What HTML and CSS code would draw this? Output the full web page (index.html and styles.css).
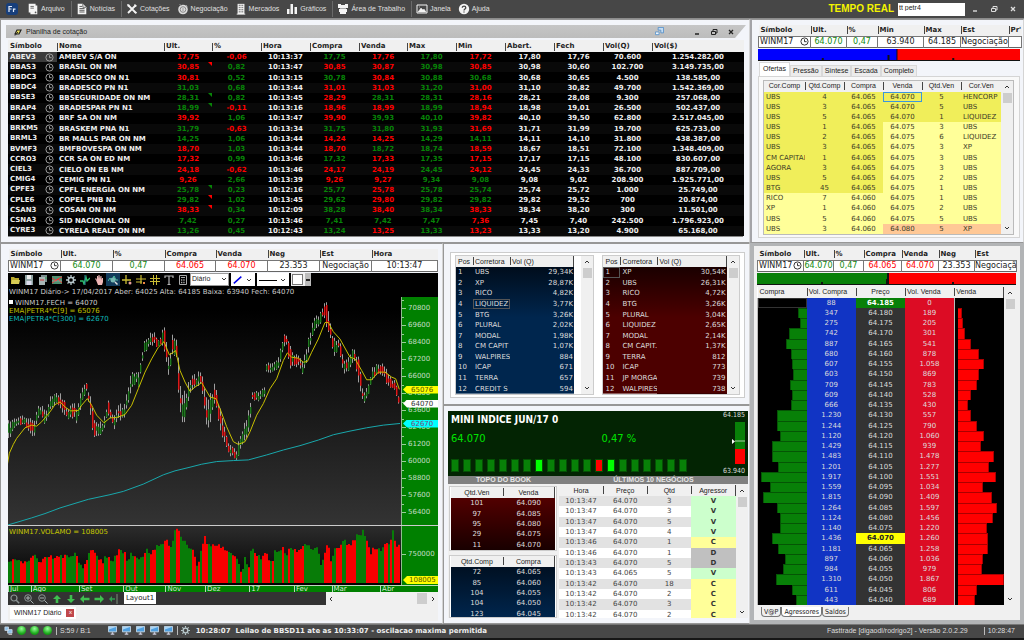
FILE: index.html
```html
<!DOCTYPE html>
<html lang="pt-BR">
<head>
<meta charset="utf-8">
<title>Fasttrade</title>
<link rel="stylesheet" href="styles.css">
</head>
<body>
<svg class="sprite" aria-hidden="true">
  <symbol id="i-clock" viewBox="0 0 10 10"><circle cx="5" cy="5" r="4" fill="none" stroke="currentColor"/><path d="M5 2.500V5.200H7.400" fill="none" stroke="currentColor"/></symbol>
  <symbol id="i-file" viewBox="0 0 12 14"><path d="M1 1h8v2h2v10H3v-2H1z" fill="#f4f4f4"/><path d="M3 4h4M3 6h4" stroke="#555"/><circle cx="9" cy="11" r="1" fill="#555"/></symbol>
  <symbol id="i-news" viewBox="0 0 12 14"><path d="M1 1h6l4 4v8H1z" fill="#f4f4f4"/><path d="M3 4h3M3 6.500h6M3 8.500h6M3 10.500h6" stroke="#444"/><path d="M7 1v4h4" fill="none" stroke="#555"/></symbol>
  <symbol id="i-tools" viewBox="0 0 12 12"><path d="M2 2l8 8M10 2L2 10" stroke="#f4f4f4" stroke-width="1.800"/><path d="M1 1l3 1-2 2zM8 1l3 2-2 1zM8 9l3 0-1 2z" fill="#f4f4f4"/></symbol>
  <symbol id="i-coin" viewBox="0 0 12 12"><circle cx="6" cy="6.500" r="4.800" fill="#ddd"/><circle cx="6" cy="6.500" r="2.800" fill="none" stroke="#888"/><path d="M2.500 1l2 2M6 5v3M9 2l1.500 1.500" stroke="#999"/></symbol>
  <symbol id="i-building" viewBox="0 0 12 14"><path d="M2 1h8v12H2z" fill="#f4f4f4"/><path d="M4 2v9M6 2v9M8 2v9" stroke="#555" stroke-dasharray="1.500 1"/><path d="M1 13h10" stroke="#f4f4f4"/></symbol>
  <symbol id="i-bars" viewBox="0 0 12 12"><path d="M1 6h2.500v5H1zM4.500 1H7v10H4.500zM8.500 4H11v7H8.500z" fill="#f4f4f4"/></symbol>
  <symbol id="i-desk" viewBox="0 0 12 12"><path d="M1 1h3v1h4V1h3v4H1zM2 6h8v3H9v2H3V9H2z" fill="#f4f4f4"/><path d="M3 5.500h6" stroke="#aaa"/></symbol>
  <symbol id="i-image" viewBox="0 0 12 10"><path d="M1 1h10v8H1z" fill="none" stroke="#f4f4f4"/><path d="M2 8l3-4 2 2 1-1 2 3zM3 3h1" fill="#f4f4f4" stroke="#f4f4f4" stroke-width=".5"/></symbol>
  <symbol id="i-help" viewBox="0 0 12 12"><circle cx="6" cy="6" r="5.200" fill="#f4f4f4"/><path d="M4.300 4.700c0-2.200 3.500-2.200 3.500 0C7.800 6 6 6 6 7.500M6 8.500v1" fill="none" stroke="#444" stroke-width="1.300"/></symbol>
  <symbol id="i-min" viewBox="0 0 8 8"><path d="M2 6h4" stroke="currentColor" stroke-width="1.400"/></symbol>
  <symbol id="i-restore" viewBox="0 0 8 8"><path d="M1.500 3.500h4v3h-4zM3 3.500V1.500h4v3.500H5.500" fill="none" stroke="currentColor"/></symbol>
  <symbol id="i-close" viewBox="0 0 8 8"><path d="M2 2l4 4M6 2L2 6" stroke="currentColor" stroke-width="1.300"/></symbol>
  <symbol id="i-up" viewBox="0 0 8 8"><path d="M2 5l2-2 2 2" fill="none" stroke="#333"/></symbol>
  <symbol id="i-down" viewBox="0 0 8 8"><path d="M2 3l2 2 2-2" fill="none" stroke="#333"/></symbol>
  <symbol id="i-folder" viewBox="0 0 10 10"><path d="M1 2h3l1 1h4v6H1z" fill="#b9a82c"/><path d="M1 9l1-4h8L9 9z" fill="#d8cc55"/></symbol>
  <symbol id="i-save" viewBox="0 0 10 10"><path d="M1 0h8v10H1z" fill="#8fa3a3"/><path d="M3 0h4v4H3z" fill="#eee"/><path d="M2.500 6h5v4h-5z" fill="#dde"/></symbol>
  <symbol id="i-copy" viewBox="0 0 10 10"><path d="M3 0h6v7H3z" fill="#7b8d8d"/><path d="M1 2h6v8H1z" fill="#a8b6b6"/><path d="M2 5h4" stroke="#c33"/><path d="M7 3h2" stroke="#3a5"/></symbol>
  <symbol id="i-chart" viewBox="0 0 10 10"><path d="M0 1h10v8H0z" fill="#4f8f70"/><path d="M0 3l4 3 2-2 4 4M0 8l4-3 6-3" fill="none" stroke="#e33"/><path d="M0 6h10" stroke="#bbb" stroke-width=".5"/></symbol>
  <symbol id="i-gear" viewBox="0 0 10 10"><circle cx="5" cy="5" r="2.600" fill="none" stroke="#b8c8cc" stroke-width="1.500"/><path d="M5 0v2M5 8v2M0 5h2M8 5h2M1.500 1.500l1.400 1.400M7.100 7.100l1.400 1.400M8.500 1.500L7.100 2.900M2.900 7.100L1.500 8.500" stroke="#b8c8cc" stroke-width="1.300"/></symbol>
  <symbol id="i-line" viewBox="0 0 10 10"><path d="M0 6l3 0 1 3 2-7 1 4 3-3" fill="none" stroke="#2fc06d" stroke-width="1.300"/><path d="M5 0v10" stroke="#2c8ea0"/></symbol>
  <symbol id="i-hand" viewBox="0 0 10 10"><path d="M2 5L1 4l1-1 1 2V1h1v3l.5-4h1L6 4l.5-3h1v4l.5-2h1v4l-1 3H4z" fill="#eeb6b6"/></symbol>
  <symbol id="i-zoomchart" viewBox="0 0 10 10"><path d="M0 6l2-3 2 3 2-5 2 4h2" fill="none" stroke="#4cc2a0"/><circle cx="5" cy="5" r="2.500" fill="#78b7b3"/><path d="M7 7l2.500 2.500" stroke="#ddd" stroke-width="1.500"/></symbol>
  <symbol id="i-cross" viewBox="0 0 10 10"><path d="M4 0v9M0 5h9" stroke="#cbbc33" stroke-width="1.300"/><circle cx="8" cy="8" r="1.500" fill="#e8a0a0"/></symbol>
  <symbol id="i-cross2" viewBox="0 0 10 10"><path d="M5 0v9M0 4h10M0 7h6" stroke="#cbbc33" stroke-width="1.200"/><path d="M7 7h2v2H7z" fill="#e84"/></symbol>
  <symbol id="i-grid" viewBox="0 0 10 10"><path d="M3.500 0v10M6.500 0v10M0 3.500h10M0 6.500h10" stroke="#cbbc33"/></symbol>
  <symbol id="i-type" viewBox="0 0 10 10"><path d="M1 3V1h8v2M5 1v8M3.500 9.500h3" fill="none" stroke="#b5b5b5" stroke-width="1.200"/></symbol>
  <symbol id="i-calc" viewBox="0 0 10 10"><path d="M1.500.5h7v9h-7z" fill="none" stroke="#aaa"/><path d="M3 2.500h4" stroke="#aaa"/><path d="M3 5h4M3 7.500h4" stroke="#aaa" stroke-dasharray="1 .7" stroke-width="1.500"/></symbol>
  <symbol id="i-mag" viewBox="0 0 10 10"><circle cx="4" cy="4" r="3" fill="none" stroke="#8b9494" stroke-width="1.200"/><path d="M6.200 6.200l3 3" stroke="#8b9494" stroke-width="1.500"/></symbol>
  <symbol id="i-magplus" viewBox="0 0 10 10"><circle cx="4" cy="4" r="3.300" fill="none" stroke="#8b9494"/><path d="M2 4h4M4 2v4M6.500 6.500l3 3" stroke="#aab4b4"/></symbol>
  <symbol id="i-magminus" viewBox="0 0 10 10"><circle cx="4" cy="4" r="3.300" fill="none" stroke="#8b9494"/><path d="M2 4h4M6.500 6.500l3 3" stroke="#aab4b4"/></symbol>
  <symbol id="i-aup" viewBox="0 0 10 10"><path d="M5 1l4 4H6.300v4H3.700V5H1z" fill="#3fbf4f"/></symbol>
  <symbol id="i-adown" viewBox="0 0 10 10"><path d="M5 9l4-4H6.300V1H3.700v4H1z" fill="#3fbf4f"/></symbol>
  <symbol id="i-aleft" viewBox="0 0 10 10"><path d="M0 5l4-4v2.700h5.500v2.600H4V9z" fill="#3fbf4f"/></symbol>
  <symbol id="i-aright" viewBox="0 0 10 10"><path d="M10 5L6 1v2.700H.5v2.600H6V9z" fill="#3fbf4f"/></symbol>
  <symbol id="i-aend" viewBox="0 0 10 10"><path d="M1 5l3-3v2.300h3v1.400H4V8z" fill="#2f9f4f"/><path d="M9 0v10" stroke="#7a8f7a"/></symbol>
  <symbol id="i-pc" viewBox="0 0 10 10"><path d="M.5.5h9v6h-9z" fill="#4f9fe0" stroke="#c5d8e8"/><path d="M1 1h8L1 4z" fill="#a8d4f6"/><path d="M3 9h4M5 7v2" stroke="#ccd" stroke-width="1.500"/></symbol>
  <symbol id="i-net" viewBox="0 0 10 10"><path d="M1 1h4v4H1zM4 4h5v4H4z" fill="#8fc0e8" stroke="#d5e2ee" stroke-width=".8"/><path d="M5 9.500h4" stroke="#ccc"/></symbol>
  <symbol id="i-plug" viewBox="0 0 8 8"><path d="M1 6l2-4h4L5 6z" fill="#e8dc55" stroke="#222" stroke-width="1.200"/><path d="M1 7.500L4 4" stroke="#222"/></symbol>
  <symbol id="i-pop" viewBox="0 0 10 10"><path d="M3.500.5h6v6h-3v-3h-3z" fill="#c5dcf2" stroke="#5b94cc"/><path d="M.5 5.500h4v3h-4z" fill="#eef5fb" stroke="#5b94cc"/></symbol>
</svg>

<div class="app">
  <header class="menubar">
    <nav class="menus">
      <svg class="logo" viewBox="0 0 12 12" role="img" aria-label="Fasttrade"><rect width="12" height="12" rx="3" fill="#173f7c"/><path d="M3 9V3.500h3M3 6h2.500M7.500 9V6.200h2" fill="none" stroke="#e6eefc" stroke-width="1.200"/></svg>
      <button><svg><use href="#i-file"/></svg>Arquivo</button>
      <button class="sep"><svg><use href="#i-news"/></svg>Notícias</button>
      <button class="sep"><svg><use href="#i-tools"/></svg>Cotações</button>
      <button><svg><use href="#i-coin"/></svg>Negociação</button>
      <button><svg><use href="#i-building"/></svg>Mercados</button>
      <button><svg><use href="#i-bars"/></svg>Gráficos</button>
      <button class="sep"><svg><use href="#i-desk"/></svg>Área de Trabalho</button>
      <button class="sep"><svg><use href="#i-image"/></svg>Janela</button>
      <button><svg><use href="#i-help"/></svg>Ajuda</button>
    </nav>
    <div class="live">
      <strong>TEMPO REAL</strong>
      <input type="text" value="tt petr4" aria-label="Comando">
    </div>
    <div class="winbtns">
      <button aria-label="Minimizar"><svg><use href="#i-min"/></svg></button>
      <button aria-label="Restaurar"><svg><use href="#i-restore"/></svg></button>
      <button aria-label="Fechar"><svg><use href="#i-close"/></svg></button>
    </div>
  </header>

  <main class="desk">
    <section class="panel quotes">
      <div class="titlebar">
        <svg><use href="#i-plug"/></svg><h2>Planilha de cotação</h2>
        <svg class="pop"><use href="#i-pop"/></svg>
        <button aria-label="Minimizar planilha"><svg><use href="#i-min"/></svg></button>
        <button aria-label="Restaurar planilha"><svg><use href="#i-restore"/></svg></button>
        <button aria-label="Fechar planilha"><svg><use href="#i-close"/></svg></button>
      </div>
      <div class="sheet">
        <table>
          <colgroup><col style="width:49px"><col style="width:107px"><col style="width:48px"><col style="width:49px"><col style="width:49px"><col style="width:49px"><col style="width:48px"><col style="width:49px"><col style="width:49px"><col style="width:49px"><col style="width:49px"><col style="width:49px"><col style="width:92px"></colgroup>
          <thead><tr><th>Símbolo</th><th>Nome</th><th>Ult.</th><th>%</th><th>Hora</th><th>Compra</th><th>Venda</th><th>Max</th><th>Min</th><th>Abert.</th><th>Fech</th><th>Vol(Q)</th><th>Vol($)</th></tr></thead>
          <tbody id="quotes"></tbody>
        </table>
      </div>
    </section>

    <section class="panel offers">
      <table class="summary">
        <colgroup><col style="width:52px"><col style="width:36px"><col style="width:31px"><col style="width:46px"><col style="width:37px"><col style="width:48px"><col style="width:13px"></colgroup>
        <thead><tr><th>Símbolo</th><th>Ult.</th><th>%</th><th>Min</th><th>Max</th><th>Est</th><th>Pr'</th></tr></thead>
        <tbody><tr><td class="sym">WINM17<svg><use href="#i-clock"/></svg></td><td class="g">64.070</td><td class="g">0,47</td><td>63.940</td><td>64.185</td><td>Negociação</td><td></td></tr></tbody>
      </table>
      <svg class="force" viewBox="0 0 263 12" preserveAspectRatio="none"><rect width="263" height="12" fill="#111"/><rect width="139" height="11" fill="#0000fe"/><rect x="140" width="123" height="11" fill="#fe0000"/><path d="M64 9h2v3h-2zM130 6h2v6h-2zM195 9h2v3h-2z" fill="#111"/></svg>
      <div class="tabs" role="tablist">
        <button role="tab" aria-selected="true">Ofertas</button><button role="tab">Pressão</button><button role="tab">Síntese</button><button role="tab">Escada</button><button role="tab">Completo</button>
      </div>
      <div class="tabpane">
        <div class="scrollbox">
          <div class="view">
            <table class="light">
              <colgroup><col style="width:41px"><col style="width:39px"><col style="width:39px"><col style="width:39px"><col style="width:39px"><col style="width:41px"></colgroup>
              <thead><tr><th>Cor.Comp</th><th>Qtd.Comp</th><th>Compra</th><th>Venda</th><th>Qtd.Ven</th><th>Cor.Ven</th></tr></thead>
              <tbody id="offers"></tbody>
            </table>
          </div>
          <div class="scroll"><svg><use href="#i-up"/></svg><i></i><svg><use href="#i-down"/></svg></div>
        </div>
      </div>
    </section>

    <section class="panel chart">
      <table class="summary">
        <colgroup><col style="width:52px"><col style="width:52px"><col style="width:52px"><col style="width:51px"><col style="width:52px"><col style="width:52px"><col style="width:52px"><col style="width:66px"></colgroup>
        <thead><tr><th>Símbolo</th><th>Ult.</th><th>%</th><th>Compra</th><th>Venda</th><th>Neg</th><th>Est</th><th>Hora</th></tr></thead>
        <tbody><tr><td class="sym">WINM17<svg><use href="#i-clock"/></svg></td><td class="g">64.070</td><td class="g">0,47</td><td class="r">64.065</td><td class="r">64.070</td><td>23.353</td><td>Negociação</td><td>10:13:47</td></tr></tbody>
      </table>
      <div class="tools">
        <button aria-label="Abrir"><svg><use href="#i-folder"/></svg></button>
        <button aria-label="Salvar"><svg><use href="#i-save"/></svg></button>
        <button aria-label="Copiar"><svg><use href="#i-copy"/></svg></button>
        <button aria-label="Indicadores"><svg><use href="#i-chart"/></svg></button>
        <button aria-label="Configurar"><svg><use href="#i-gear"/></svg></button>
        <button aria-label="Estudo"><svg><use href="#i-line"/></svg></button>
        <button aria-label="Mover"><svg><use href="#i-hand"/></svg></button>
        <button aria-label="Zoom no gráfico" class="on"><svg><use href="#i-zoomchart"/></svg></button>
        <button aria-label="Cursor"><svg><use href="#i-cross"/></svg></button>
        <button aria-label="Cursor múltiplo"><svg><use href="#i-cross2"/></svg></button>
        <button aria-label="Grade"><svg><use href="#i-grid"/></svg></button>
        <button aria-label="Texto"><svg><use href="#i-type"/></svg></button>
        <button aria-label="Calculadora"><svg><use href="#i-calc"/></svg></button>
        <span class="period"><select aria-label="Período"><option>Diário</option></select><svg><use href="#i-down"/></svg></span>
        <button class="pick w24" aria-label="Ferramenta"><svg viewBox="0 0 12 10"><path d="M1 9l9-8" stroke="#0000e8" stroke-width="1.800"/></svg><svg><use href="#i-down"/></svg></button>
        <button class="pick w32" aria-label="Espessura"><svg class="wide" viewBox="0 0 20 10"><path d="M0 5.500h18" stroke="#000"/></svg><svg><use href="#i-down"/></svg></button>
        <button class="color" aria-label="Cor"><span></span><b></b></button>
      </div>
      <div class="price">
        <div class="plot">
          <svg id="plot" viewBox="24 123 1179 720" preserveAspectRatio="none"></svg>
          <div class="legend">
            <p>WINM17 Diário-&gt; 17/04/2017 Aber: 64025 Alta: 64185 Baixa: 63940 Fech: 64070</p>
            <p class="first"><i></i>WINM17.FECH = 64070</p>
            <p class="y">EMA|PETR4*C[9] = 65076</p>
            <p class="c">EMA|PETR4*C[300] = 62670</p>
          </div>
        </div>
        <div class="axis">
          <ol id="scale"></ol>
          <span class="tag ema">65076</span><span class="tag last">64070</span><span class="tag slow">62670</span>
        </div>
      </div>
      <div class="volume">
        <div class="plot"><svg id="volume" viewBox="24 261 1179 177" preserveAspectRatio="none"></svg><p class="y">WINM17.VOLAMO = 108005</p></div>
        <div class="axis"><span class="mark">750000</span><span class="tag vol">108005</span></div>
      </div>
      <div class="months"><span style="flex-grow:68">Jul</span><span style="flex-grow:145">Ago</span><span style="flex-grow:133">Set</span><span style="flex-grow:127">Out</span><span style="flex-grow:119">Nov</span><span style="flex-grow:133">Dez</span><span style="flex-grow:134">17</span><span style="flex-grow:113">Fev</span><span style="flex-grow:146">Mar</span><span style="flex-grow:174">Abr</span></div>
      <div class="navrow">
        <button aria-label="Zoom"><svg><use href="#i-mag"/></svg></button>
        <button aria-label="Ampliar"><svg><use href="#i-magplus"/></svg></button>
        <button aria-label="Reduzir"><svg><use href="#i-magminus"/></svg></button>
        <button aria-label="Subir"><svg><use href="#i-aup"/></svg></button>
        <button aria-label="Descer"><svg><use href="#i-adown"/></svg></button>
        <button aria-label="Esquerda"><svg><use href="#i-aleft"/></svg></button>
        <button aria-label="Direita"><svg><use href="#i-aright"/></svg></button>
        <button aria-label="Início"><svg><use href="#i-aend"/></svg></button>
        <button class="layout">Layout1</button>
        <div class="hscroll"><svg class="l"><use href="#i-up"/></svg><i></i><svg class="rt"><use href="#i-up"/></svg></div>
      </div>
      <div class="docs"><button>WINM17 Diário <span>x</span></button></div>
    </section>

    <section class="panel ranks">
      <div class="pair">
        <div class="scrollbox blue">
          <div class="view">
            <table>
              <colgroup><col style="width:17px"><col style="width:37px"><col></colgroup>
              <thead><tr><th>Pos</th><th>Corretora</th><th>Vol (Q)</th></tr></thead>
              <tbody id="buyers"></tbody>
            </table>
          </div>
          <div class="scroll"><svg><use href="#i-up"/></svg><i></i><svg><use href="#i-down"/></svg></div>
        </div>
        <div class="scrollbox red">
          <div class="view">
            <table>
              <colgroup><col style="width:17px"><col style="width:37px"><col></colgroup>
              <thead><tr><th>Pos</th><th>Corretora</th><th>Vol (Q)</th></tr></thead>
              <tbody id="sellers"></tbody>
            </table>
          </div>
          <div class="scroll"><svg><use href="#i-up"/></svg><i></i><svg><use href="#i-down"/></svg></div>
        </div>
      </div>
    </section>

    <section class="panel book">
      <div class="ticker">
        <div class="tick-main">
          <h2>MINI INDICE JUN/17 0</h2>
          <div class="nums"><span>64.070</span><span>0,47 %</span></div>
          <div class="leds" id="leds"></div>
        </div>
        <div class="range"><span>64.185</span><svg viewBox="0 0 14 42" preserveAspectRatio="none"><rect x="4" width="10" height="27" fill="#088008"/><rect x="4" y="27" width="10" height="15" fill="#fe0000"/><path d="M4 19h10" stroke="#aca"/><path d="M1 17l3 2.500-3 2.500z" fill="#fff"/></svg><span>63.940</span></div>
      </div>
      <div class="caps"><h3>TOPO DO BOOK</h3><h3>ÚLTIMOS 10 NEGÓCIOS</h3></div>
      <div class="lower">
        <div class="tops">
          <div class="box sell"><table class="light"><thead><tr><th>Qtd.Ven</th><th>Venda</th></tr></thead><tbody id="asks"></tbody></table></div>
          <div class="box buy"><table class="light"><thead><tr><th>Qtd.Comp</th><th>Compra</th></tr></thead><tbody id="bids"></tbody></table></div>
        </div>
        <div class="scrollbox deals">
          <div class="view"><table class="light"><thead><tr><th>Hora</th><th>Preço</th><th>Qtd</th><th>Agressor</th></tr></thead><tbody id="deals"></tbody></table></div>
          <div class="scroll"><svg><use href="#i-up"/></svg><i></i><svg><use href="#i-down"/></svg></div>
        </div>
      </div>
    </section>

    <section class="panel ladder">
      <table class="summary">
        <colgroup><col style="width:46px"><col style="width:30px"><col style="width:30px"><col style="width:38px"><col style="width:37px"><col style="width:36px"><col style="width:42px"></colgroup>
        <thead><tr><th>Símbolo</th><th>Ult.</th><th>%</th><th>Compra</th><th>Venda</th><th>Neg</th><th>Est</th></tr></thead>
        <tbody><tr><td class="sym">WINM17<svg><use href="#i-clock"/></svg></td><td class="g">64.070</td><td class="g">0,47</td><td class="r">64.065</td><td class="r">64.070</td><td>23.353</td><td>Negociação</td></tr></tbody>
      </table>
      <svg class="force" viewBox="0 0 259 12" preserveAspectRatio="none"><rect width="259" height="12" fill="#111"/><rect width="130" height="11" fill="#088008"/><rect x="132" width="127" height="11" fill="#fe0000"/><path d="M64 9h2v3h-2zM129 6h2v6h-2zM195 9h2v3h-2z" fill="#111"/></svg>
      <div class="scrollbox">
        <div class="view">
          <table class="light">
            <thead><tr><th class="lft">Compra</th><th class="lft">Vol. Compra</th><th>Preço</th><th class="lft">Vol. Venda</th><th class="lft">Venda</th></tr></thead>
            <tbody id="ladder"></tbody>
          </table>
        </div>
        <div class="scroll"><svg><use href="#i-up"/></svg><i></i><svg><use href="#i-down"/></svg></div>
      </div>
      <div class="sheettabs"><button>V@P</button><button class="cur">Agressores</button><button>Saldos</button></div>
    </section>
  </main>

  <footer class="status">
    <svg><use href="#i-net"/></svg>
    <i class="led"></i><i class="led"></i><i class="led"></i>
    <span class="bar">S:59 / B:1</span>
    <span class="pcs"><svg><use href="#i-pc"/></svg><svg><use href="#i-pc"/></svg><svg><use href="#i-pc"/></svg><svg><use href="#i-pc"/></svg><svg><use href="#i-pc"/></svg></span>
    <span class="bar news"><svg><use href="#i-gear"/></svg><strong>10:28:07&nbsp; Leilao de BBSD11 ate as 10:33:07 - oscilacao maxima permitida</strong></span>
    <span class="ver">Fasttrade [digaodl/rodrigo2] - Versão 2.0.2.29</span>
    <span class="bar clock">10:28:47</span>
  </footer>
</div>
<script src="app.js"></script>
</body>
</html>
```
FILE: styles.css
```css
:root {
  --ui: "Liberation Sans", Tahoma, Arial, sans-serif;
  --narrow: "DejaVu Sans Condensed", Tahoma, sans-serif;
  --wide: "DejaVu Sans", Verdana, sans-serif;
}
* { box-sizing: border-box; }
body {
  margin: 0;
  font: 7px/8px var(--wide);
  color: #222;
  background: #f3f5fa;
}
h2, h3, p, ol { margin: 0; padding: 0; font-size: inherit; font-weight: normal; list-style: none; }
button, input, select { font: inherit; color: inherit; }
button { border: 0; padding: 0; background: none; }
svg { display: block; flex: none; width: 8px; height: 8px; }
.sprite { position: absolute; width: 0; height: 0; }

.app { display: grid; grid-template-rows: 19px minmax(0, 1fr) 16px; height: 100vh; }

/* top menu */
.menubar { display: flex; align-items: center; background: #474747; color: #e0e0e0; border-bottom: 1px solid #8c8c8c; }
.menus { display: flex; align-items: center; flex: 1; padding-left: 6px; font-family: var(--ui); }
.menus .logo { width: 12px; height: 12px; margin-right: 5px; }
.menus button { display: flex; align-items: center; gap: 2px; height: 16px; padding: 0 3px 0 4px; white-space: nowrap; }
.menus button svg { width: 12px; height: 12px; }
.menus .sep { margin-left: 3px; border-left: 1px solid #6a6a6a; }
.live { display: flex; align-items: center; gap: 4px; }
.live strong { font: bold 10px/12px var(--ui); color: #f4f400; }
.live input { width: 67px; height: 13px; border: 0; padding: 0 1px 3px; background: #fff; color: #222; font-family: var(--ui); }
.winbtns { display: flex; gap: 11px; padding: 0 7px 0 6px; }
.winbtns button { color: #ddd; }

/* panels */
.desk {
  display: grid;
  grid-template-columns: 443fr 307fr 274fr;
  grid-template-rows: 224fr 162fr 219fr;
}
.panel { display: flex; flex-direction: column; min-width: 0; min-height: 0; background: #f3f5fa; border: 1px solid #979797; border-right-color: #d4d4d4; }
.quotes { grid-column: 1 / 3; padding: 5px 3px 5px 5px; }
.offers { grid-column: 3; border-left: 2px solid #a4a4a8; padding: 5px 3px 4px 6px; overflow: hidden; }
.chart { grid-column: 1; grid-row: 2 / 4; padding: 5px 4px 2px 7px; }
.ranks { grid-column: 2; padding: 8px 4px 6px 6px; }
.book { grid-column: 2; padding: 5px 1px 5px 4px; }
.ladder { grid-column: 3; grid-row: 2 / 4; border: 4px solid #b2b4b6; border-top-width: 3px; padding: 3px 4px 1px 3px; background: #f0f0f0; overflow: hidden; }

table { width: 100%; border-collapse: collapse; table-layout: fixed; }
th, td { padding: 0; overflow: hidden; white-space: nowrap; }
th + th { background-image: linear-gradient(#444, #444); background-size: 1px 8px; background-repeat: no-repeat; background-position: 0 1px; }
.g { color: #108a10; }
.r { color: #f00; }
.y { color: #c8c800; }
.c { color: #10b8b8; }

/* quote sheet */
.titlebar { display: flex; align-items: center; height: 13px; padding: 0 11px 0 8px; background: linear-gradient(#c6c6c6, #bcbcbc); clip-path: polygon(0 0, 100% 0, calc(100% - 11px) 100%, 0 100%); }
.titlebar h2 { flex: 1; padding-left: 4px; font-family: var(--ui); }
.titlebar button { margin-left: 9px; }
.titlebar .pop { width: 9px; height: 9px; margin-right: 20px; }
.sheet { flex: 1; min-height: 0; margin: 2px 3px 0 2px; border-bottom: 1px solid #888; background: #000; }
.sheet table { height: 100%; font-weight: bold; }
.sheet tbody { background: #000; color: #eee; text-align: center; }
.sheet th { height: 12px; padding-left: 2px; background-color: #f0f0f0; color: #222; text-align: left; }
.sheet th + th { background-position: 0 3px; }
.sheet td { position: relative; }
.sheet td:first-child { text-align: left; padding-left: 2px; }
.sheet td:first-child svg { float: right; width: 9px; height: 9px; margin-right: 3px; color: #aaa; }
.sheet td:nth-child(2) { text-align: left; padding-left: 2px; }
.sheet tr:nth-child(even) td { background: #090909; }
.sheet tbody tr:first-child td:first-child { background: #3c3c3c; }
.sheet .g { color: #078407; }
.tick::after { content: ""; position: absolute; right: 0; top: 0; border: 2px solid transparent; border-top-color: currentColor; border-right-color: currentColor; }
.tick.tr::after { color: #f00; }
.tick.tg::after { color: #078407; }

/* one-line summary */
.summary { flex: none; border-bottom: 1px solid #666; }
.summary th { height: 11px; text-align: left; font-weight: bold; padding-left: 2px; background-color: #f0f0f0; }
.summary td { height: 11px; padding: 0; font-size: 8px; line-height: 9px; text-align: center; background: #fff; border: 1px solid #777; border-bottom: 0; }
.summary .sym { text-align: left; padding-left: 1px; position: relative; }
.summary .sym svg { position: absolute; right: 1px; top: 0; width: 9px; height: 9px; }
.force { width: 100%; height: 12px; margin-top: 1px; }

/* offers */
.tabs { display: flex; align-items: flex-end; height: 15px; padding-left: 1px; font-family: var(--ui); }
.tabs button { height: 11px; padding: 0 2px; background: #ececec; border: 1px solid #d9d9d9; border-bottom: 0; }
.tabs button[aria-selected] { height: 14px; padding: 0 3px; background: #fff; }
.tabpane { flex: 1; display: flex; min-height: 0; padding: 3px 5px 2px 4px; background: #f9f9f9; border: 1px solid #d5d5d5; }
.scrollbox { flex: 1; display: flex; min-width: 0; min-height: 0; border: 1px solid #bbb; background: #fff; overflow: hidden; }
.view { flex: 1; min-width: 0; overflow: hidden; }
.view table { height: 100%; }
.scroll { display: flex; flex-direction: column; flex: none; width: 12px; padding: 2px 1px; background: #f0f0f0; align-items: center; }
.scroll i { width: 9px; height: 10px; margin: 2px 0 auto; background: #cdcdcd; }
.light th { height: 11px; font-weight: normal; text-align: center; font-family: var(--ui); background-color: #f0f0f0; }
.light td { text-align: center; }
.light .lft { text-align: left; padding-left: 2px; }
.light th:last-child { border-right: 1px solid #444; }
#offers td { background: #ffff99; color: #3c3c28; }
#offers .hot { background: #f0ee5a; }
#offers .warm { background: #ffc896; }
#offers .pick { outline: 1px solid #3a96dd; outline-offset: -1px; }
#offers td:first-child, #offers td:last-child { text-align: left; padding-left: 2px; }

/* chart */
.tools { display: flex; align-items: center; height: 14px; background: #000; margin-top: 1px; }
.tools button { display: flex; align-items: center; justify-content: center; width: 14px; height: 13px; }
.tools button svg { width: 10px; height: 10px; }
.tools .on { background: #123a5a; }
.period { position: relative; margin: 0 2px 0 0; }
.period svg { position: absolute; right: 1px; top: 2px; pointer-events: none; }
.tools select { display: block; appearance: none; width: 39px; height: 13px; padding: 0 0 2px 1px; border: 1px solid #999; border-radius: 0; background: #fff; color: #222; font-family: var(--ui); }
.tools .pick { justify-content: space-between; margin-right: 2px; padding: 0 2px; background: #fff; }
.tools .pick svg:last-child { width: 8px; height: 8px; }
.tools .w24 { width: 24px; }
.tools .w32 { width: 32px; }
.tools .pick .wide { width: 20px; }
.tools .color { width: 20px; background: #f0f0f0; justify-content: space-between; }
.color span { width: 11px; height: 11px; margin-left: 1px; background: #fff; border: 1px solid #777; }
.color b { width: 6px; height: 13px; background: linear-gradient(#222, #222) center / 4px 2px no-repeat #bbb; }
.price { flex: 1; display: flex; min-height: 0; background: linear-gradient(#000 0 9%, #333); border-bottom: 1px solid #ccc; }
.plot { position: relative; flex: 1; min-width: 0; }
.plot > svg { position: absolute; width: 100%; height: 100%; }
.legend { position: relative; color: #ccc; padding: 1px 0 0 1px; white-space: nowrap; }
.legend .first { margin-top: 3px; }
.legend i { display: inline-block; width: 4px; height: 4px; margin-right: 2px; background: #fff; vertical-align: 1px; }
.legend .y { color: #c0c000; }
.axis { position: relative; width: 37px; background: #008000; border-left: 1px solid #8fc08f; color: #c4dcc4; }
.price .axis { margin-top: 10px; overflow: hidden; padding-top: 3px; }
.axis li { height: 17px; padding-left: 6px; line-height: 17px; background: linear-gradient(#9c9, #9c9) 0 8px / 4px 1px no-repeat, linear-gradient(#9c9, #9c9) 0 0 / 2px 1px no-repeat; }
.tag { position: absolute; left: 1px; right: 0; height: 8px; padding-left: 8px; line-height: 8px; clip-path: polygon(0 50%, 4px 0, 100% 0, 100% 100%, 4px 100%); }
.ema { top: 89px; background: #ff0; color: #555500; }
.last { top: 103px; background: #fff; color: #333; }
.slow { top: 123px; background: #0ff; color: #7a4a7a; }
.volume { display: flex; height: 59px; background: linear-gradient(#2c2c2c, #000); }
.volume p { position: relative; padding: 2px 1px; }
.mark { position: absolute; left: 0; top: 24px; padding-left: 6px; background: linear-gradient(#9c9, #9c9) 0 4px / 4px 1px no-repeat; }
.vol { bottom: 1px; background: #ff0; color: #555500; padding-left: 6px; }
.months { display: flex; height: 7px; line-height: 7px; overflow: hidden; background: #008000; color: #d8e8d8; border-top: 1px solid #bcd8bc; }
.months span { flex: 0 1 0; min-width: 0; text-indent: 2px; background: linear-gradient(#bcd8bc, #bcd8bc) 0 0 / 1px 100% no-repeat; }
.navrow { display: flex; height: 13px; background: #333; }
.navrow button { width: 14px; display: flex; justify-content: center; align-items: center; }
.navrow button svg { width: 10px; height: 10px; }
.navrow .layout { width: 32px; height: 12px; margin-left: 4px; background: #fff; }
.hscroll { display: flex; align-items: center; width: 112px; margin-left: auto; padding: 0 1px; background: #f0f0f0; }
.hscroll .l { transform: rotate(-90deg); }
.hscroll .rt { transform: rotate(90deg); }
.hscroll i { width: 10px; height: 11px; margin-left: auto; margin-right: 2px; background: #cdcdcd; }
.docs { display: flex; height: 16px; padding: 2px 0 2px 2px; background: #f0f0f0; font-family: var(--ui); }
.docs button { display: flex; align-items: center; gap: 5px; padding: 0 2px 0 4px; background: #fff; }
.docs span { width: 8px; height: 8px; background: #c0474b; color: #fff; font-size: 6px; line-height: 7px; text-align: center; }

/* broker ranking */
.pair { flex: 1; display: grid; grid-template-columns: 149fr 147fr; min-height: 0; border: 1px solid #ccc; background: #fff; }
.pair > div { margin: 2px 4px; background: #fff; border-color: #ccc; }
.blue .view { margin-right: 7px; }
.ranks th { height: 11px; padding-left: 2px; text-align: left; font-weight: normal; font-family: var(--ui); background-color: #f0f0f0; }
.ranks th:last-child { border-right: 1px solid #444; }
.ranks tbody { color: #ddd; }
.ranks td { padding-left: 2px; }
.ranks td:last-child { text-align: right; padding-right: 1px; }
.blue tbody { background: linear-gradient(#000d1c, #00264e 40%, #00264e); }
.red tbody { background: linear-gradient(#1a0000, #4c0000 40%, #4c0000); }
.ranks .focus { outline: 1px solid #555; outline-offset: -1px; }

/* ticker and book */
.ticker { display: flex; height: 65px; background: #032403; }
.tick-main { flex: 1; display: flex; flex-direction: column; padding: 4px 0 4px 3px; }
.tick-main h2 { font: bold 10px/10px var(--narrow); color: #fff; }
.nums { display: grid; grid-template-columns: 150fr 114fr; margin-top: 7px; font: 11px/13px var(--narrow); color: #00e400; }
.leds { display: flex; gap: 4px; margin-top: auto; }
.leds i { width: 8px; height: 13px; background: #088008; border: 1px solid #045004; }
.leds .hi { background: #0f0; }
.leds .dn { background: #f00; }
.range { display: flex; flex-direction: column; align-items: flex-end; justify-content: space-between; width: 32px; padding: 0 3px 1px 0; color: #ddd; font-family: var(--narrow); }
.range svg { width: 14px; height: 42px; }
.caps { display: grid; grid-template-columns: 111fr 189fr; height: 8px; background: #808080; color: #e6e6e6; text-align: center; }
.caps h3 { font-weight: bold; font-family: var(--ui); }
.lower { flex: 1; display: grid; grid-template-columns: 111fr 189fr; min-height: 0; padding-top: 1px; background: #f0f0f0; }
.tops { display: grid; grid-template-rows: 65px 1fr; gap: 4px; min-height: 0; padding: 1px 2px 0 1px; }
.box { min-height: 0; overflow: hidden; background: #fff; border: 1px solid #ccc; padding: 0 1px; }
.box table { height: 63px; }
.box tbody { color: #ddd; }
.sell tbody { background: linear-gradient(#520000, #180000); }
.buy tbody { background: linear-gradient(#001022, #00264e); }
.deals { border: 0; }
.deals .view table { height: 135px; }
.deals tr:nth-child(odd) td { background: #e2e2e2; }
.deals tr:nth-child(even) td { background: #fff; }
#deals td { color: #444; }
#deals td:last-child { font-weight: bold; color: #333; }
#deals .V { background: #ccffcc; }
#deals .C { background: #ffff99; }
#deals .D { background: #c0c0c0; }

/* price ladder */
.ladder .scrollbox { border: 0; margin-top: 2px; }
#ladder { color: #ddd; background: #000; }
#ladder td:nth-child(2) { background: #1134c4; }
#ladder td:nth-child(3) { background: #333; }
#ladder td:nth-child(4) { background: #dc0c24; }
#ladder tr, #ladder .bar { height: 10px; }
#ladder i { display: block; height: 100%; min-height: 10px; }
#ladder .b i { margin-left: auto; background: #088008; border: 1px solid #055505; border-right: 0; border-bottom: 0; }
#ladder .s i { background: #f00; border: 1px solid #a00; border-left: 0; border-bottom: 0; }
#ladder td.top { background: #088008; color: #fff; font-weight: bold; }
#ladder td.now:nth-child(3) { background: #ff0; color: #222; font-weight: bold; }
#ladder td.top:nth-child(3) { background: #088008; }
#ladder .focus { outline: 1px solid #333; outline-offset: -1px; }
.sheettabs { display: flex; height: 14px; padding: 2px 0 2px 4px; font-family: var(--narrow); }
.sheettabs button { padding: 0 2px; border: 1px solid #777; border-top: 0; border-radius: 0 0 4px 4px; background: #f0f0f0; }
.sheettabs .cur { background: #fff; }

/* status bar */
.status { display: flex; align-items: center; gap: 4px; padding: 0 9px 2px 4px; background: #474747; border-top: 1px solid #777; border-bottom: 2px solid #161616; color: #ddd; white-space: nowrap; font-family: var(--ui); }
.status svg { width: 9px; height: 9px; }
.led { width: 9px; height: 9px; border-radius: 50%; background: radial-gradient(circle at 50% 30%, #9f9, #1fae1f 60%, #0b700b); }
.bar { border-left: 1px solid #bbb; padding-left: 3px; }
.pcs { display: flex; gap: 5px; margin-left: 13px; }
.news { display: flex; align-items: center; gap: 6px; padding-left: 3px; }
.news strong { font-family: var(--wide); color: #eee; }
.ver { margin-left: auto; margin-right: 12px; }
```
FILE: app.js
```js
const byId = id => document.getElementById(id);
const fill = (id, rows) => { byId(id).innerHTML = rows.join(''); };
const lines = text => text.trim().split('\n').map(l => l.trim().split('|'));

const quotes = lines(`
ABEV3|AMBEV S/A ON|r17,75|r-0,06|10:13:37|g17,75|r17,76|g17,80|r17,72|17,80|17,76|70.600|1.254.282,00
BBAS3|BRASIL ON NM|r30,85|g0,82|10:13:47|r30,85|r30,87|g30,98|r30,85|30,98|30,60|102.700|3.149.735,00
BBDC3|BRADESCO ON N1|r30,81|g0,52|10:13:15|g30,78|r30,84|g30,88|g30,68|30,68|30,65|4.500|138.585,00
BBDC4|BRADESCO PN N1|g31,03|g0,68|10:13:44|r31,01|r31,03|g31,20|r31,00|31,10|30,82|49.700|1.542.369,00
BBSE3|BBSEGURIDADE ON NM|g28,31|g0,82|10:13:45|r28,29|g28,31|g28,31|r28,16|28,21|28,08|9.300|257.068,00
BRAP4|BRADESPAR PN N1|g18,99|r-0,11|10:13:16|r18,96|r18,99|g18,99|r18,94|18,98|19,01|26.500|502.437,00
BRFS3|BRF SA ON NM|r39,92|g1,06|10:13:47|r39,90|g39,93|g40,10|r39,82|40,10|39,50|62.800|2.517.045,00
BRKM5|BRASKEM PNA N1|g31,79|r-0,63|10:13:34|g31,75|g31,80|g31,93|r31,69|31,71|31,99|19.700|625.733,00
BRML3|BR MALLS PAR ON NM|g14,25|g1,06|10:13:44|r14,24|r14,25|g14,29|g14,11|14,11|14,10|31.800|438.387,00
BVMF3|BMFBOVESPA ON NM|r18,70|g1,03|10:13:44|r18,70|g18,72|g18,74|r18,59|18,67|18,51|72.100|1.348.409,00
CCRO3|CCR SA ON ED NM|r17,32|g0,99|10:13:46|g17,32|r17,33|g17,35|r17,15|17,17|17,15|48.100|830.607,00
CIEL3|CIELO ON EB NM|r24,18|r-0,62|10:13:46|r24,17|r24,19|g24,45|r24,12|24,45|24,33|36.700|887.709,00
CMIG4|CEMIG PN N1|r9,26|g2,66|10:13:39|r9,26|r9,27|g9,34|g9,08|9,08|9,02|208.900|1.925.771,00
CPFE3|CPFL ENERGIA ON NM|g25,78|g0,23|10:12:16|g25,77|r25,78|g25,78|g25,74|25,74|25,72|1.000|25.749,00
CPLE6|COPEL PNB N1|g29,82|g1,02|10:13:45|g29,62|r29,80|g29,82|g29,82|29,82|29,52|700|20.874,00
CSAN3|COSAN ON NM|r38,33|g0,34|10:12:09|g38,28|r38,40|g38,34|r38,33|38,34|38,20|300|11.501,00
CSNA3|SID NACIONAL ON|g7,42|g0,27|10:13:46|g7,41|g7,42|g7,47|r7,36|7,45|7,40|242.500|1.796.923,00
CYRE3|CYRELA REALT ON NM|g13,26|g0,45|10:12:43|g13,24|r13,25|g13,33|r13,23|13,33|13,20|4.900|65.168,00`);
const ticks = { BBAS3: 'r', BBSE3: 'g', BRAP4: 'g', CPFE3: 'g', CPLE6: 'r', CSAN3: 'r' };
fill('quotes', quotes.map(row => '<tr>' + row.map((v, i) => {
  if (i === 0) return `<td><svg><use href="#i-clock"/></svg>${v}</td>`;
  const m = i > 1 && v.match(/^([rg])(.*)/);
  const tick = i === 2 && ticks[row[0]] ? ` tick t${ticks[row[0]]}` : '';
  return m ? `<td class="${m[1]}${tick}">${m[2]}</td>` : `<td>${v}</td>`;
}).join('') + '</tr>'));

const offers = lines(`
UBS|4|64.065|64.070|5|HENCORP
UBS|3|64.065|64.070|5|UBS
UBS|5|64.065|64.070|1|LIQUIDEZ
UBS|1|64.065|64.075|3|UBS
UBS|2|64.065|64.075|6|LIQUIDEZ
UBS|3|64.065|64.075|3|XP
CM CAPITAL|1|64.065|64.075|3|UBS
AGORA|3|64.065|64.075|3|UBS
UBS|5|64.065|64.075|2|UBS
BTG|45|64.065|64.075|1|UBS
RICO|7|64.060|64.075|1|UBS
XP|1|64.060|64.075|2|UBS
UBS|5|64.060|64.075|5|UBS
UBS|3|64.060|64.080|5|XP`);
fill('offers', offers.map((row, n) => '<tr>' + row.map((v, i) => {
  const price = i < 3 ? row[2] : row[3];
  let cls = price === '64.065' || price === '64.070' ? 'hot' : price === '64.080' ? 'warm' : '';
  if (n === 0 && i === 3) cls += ' pick';
  return `<td class="${cls}">${v}</td>`;
}).join('') + '</tr>'));

const rank = (id, text, fr, fc) => fill(id, text.split(';').map((pair, n) => {
  const cells = [n + 1, ...pair.split('|')];
  return '<tr>' + cells.map((v, i) => `<td${n === fr && i === fc ? ' class="focus"' : ''}>${v}</td>`).join('') + '</tr>';
}));
rank('buyers', 'UBS|29,34K;XP|28,87K;RICO|4,82K;LIQUIDEZ|3,77K;BTG|3,26K;PLURAL|2,02K;MODAL|1,98K;CM CAPIT|1,07K;WALPIRES|884;ICAP|671;TERRA|657;CREDIT S|594', 3, 1);
rank('sellers', 'XP|30,54K;UBS|26,31K;RICO|4,72K;BTG|3,26K;PLURAL|3,04K;LIQUIDEZ|2,65K;MODAL|2,14K;CM CAPIT.|1,37K;TERRA|812;ICAP|773;JP MORGA|739;WALPIRES|738', 0, 0);

fill('leds', Array.from({ length: 20 }, (_, i) => `<i class="${i === 7 || i === 13 ? 'hi' : i === 12 ? 'dn' : ''}"></i>`));

const plain = (id, text) => fill(id, text.split(';').map(r => '<tr>' + r.split('|').map(v => `<td>${v}</td>`).join('') + '</tr>'));
plain('asks', '101|64.090;97|64.085;95|64.080;29|64.075;11|64.070');
plain('bids', '72|64.065;85|64.060;104|64.055;104|64.050;123|64.045');

const deals = '47|64.070|3|V;47|64.070|3|V;47|64.070|5|V;47|64.070|4|V;46|64.070|1|C;46|64.070|1|D;43|64.070|5|D;43|64.065|5|V;42|64.070|18|C;42|64.070|2|C;42|64.070|3|C;42|64.070|2|C';
fill('deals', deals.split(';').map(r => {
  const [s, p, q, a] = r.split('|');
  return `<tr><td>10:13:${s}</td><td>${p}</td><td>${q}</td><td class="${a}">${a}</td></tr>`;
}));

const buyVol = [88, 347, 275, 742, 887, 680, 607, 603, 709, 609, 666, 1230, 1244, 1120, 1429, 1483, 1201, 1917, 1559, 1815, 1264, 1124, 1140, 1436, 1181, 897, 984, 1310, 611, 443];
const sellVol = [0, 189, 205, 301, 541, 878, 1058, 869, 783, 528, 430, 557, 790, 1060, 939, 1478, 1277, 1551, 1034, 1409, 1597, 1456, 1220, 1260, 1258, 1036, 979, 1867, 806, 689];
const dots = n => String(n).replace(/(\d)(\d{3})$/, '$1.$2');
fill('ladder', buyVol.map((b, i) => {
  const s = sellVol[i];
  const price = 64185 - 5 * i;
  const cls = price === 64185 ? 'top' : price === 64070 ? 'now' : '';
  const bar = (v, max) => v > 100 ? `<i style="width:${Math.round(v / max * 100)}%"></i>` : '';
  return `<tr><td class="bar b${i ? '' : ' focus'}">${bar(b, 1917)}</td><td>${dots(b)}</td><td class="${cls}">${dots(price)}</td><td>${dots(s)}</td><td class="bar s">${bar(s, 1867)}</td></tr>`;
}));

fill('scale', Array.from({ length: 13 }, (_, i) => `<li>${70800 - 1200 * i}</li>`));

/* chart: [x, high, low] envelope of the daily candles */
const env = [[26,525,595],[40,510,560],[55,510,545],[70,508,540],[85,515,560],[103,520,590],[112,480,530],[125,475,510],[137,485,550],[150,455,500],[165,432,480],[178,435,490],[190,455,515],[205,490,530],[218,460,525],[232,480,540],[245,420,480],[260,410,440],[268,435,500],[275,470,545],[283,525,585],[297,530,580],[310,525,560],[325,465,510],[343,505,560],[355,460,525],[370,480,530],[382,420,490],[395,375,440],[405,370,415],[415,370,430],[425,325,370],[433,275,330],[445,270,310],[460,248,300],[475,275,310],[485,260,300],[494,230,325],[507,330,405],[517,265,340],[530,275,340],[537,350,470],[547,450,560],[560,420,510],[575,375,440],[590,390,430],[603,360,430],[612,410,480],[622,460,580],[635,430,520],[645,410,470],[655,460,530],[668,500,590],[680,570,620],[690,590,645],[700,600,640],[711,610,660],[720,560,625],[735,520,590],[748,480,560],[757,430,470],[775,440,470],[790,415,465],[796,410,455],[800,340,375],[812,345,390],[825,345,380],[838,330,375],[845,285,335],[857,250,290],[868,290,370],[880,320,370],[895,315,370],[908,335,395],[920,300,350],[930,255,310],[945,205,250],[960,200,240],[970,175,205],[983,155,270],[993,245,290],[1003,270,335],[1017,270,310],[1030,330,395],[1045,330,385],[1062,300,350],[1075,330,410],[1085,380,460],[1090,440,490],[1105,410,450],[1120,355,400],[1135,350,385],[1148,345,395],[1160,370,420],[1175,395,430],[1187,395,450],[1197,450,490]];
const fast = '22,660 28,625 40,598 50,580 75,548 95,540 110,543 125,530 150,500 165,478 180,470 195,485 212,497 235,496 245,480 262,460 275,480 290,510 312,533 330,518 350,517 375,508 395,480 415,430 435,380 455,340 475,305 492,288 508,328 527,315 540,375 555,410 570,438 585,425 605,412 630,455 648,460 660,490 680,545 700,590 715,598 735,590 750,560 770,510 790,475 810,430 830,400 850,345 862,322 875,335 895,338 910,350 922,348 935,320 955,280 975,230 985,230 1000,258 1020,280 1050,335 1065,340 1085,375 1100,403 1115,403 1135,380 1155,380 1175,395 1187,400 1198,432';
const slow = '22,842 95,820 135,807 180,790 265,764 330,750 370,740 430,718 490,690 525,678 570,667 605,658 650,650 700,647 745,645 800,630 850,615 900,602 955,585 1000,569 1050,558 1100,548 1150,540 1200,535';
let seed = 7;
const rnd = () => (seed = (seed * 16807) % 2147483647) / 2147483647;
const at = (pts, x, k) => {
  let i = 1;
  while (i < pts.length - 1 && pts[i][0] < x) i++;
  const a = pts[i - 1], b = pts[i], t = Math.min(1, Math.max(0, (x - a[0]) / (b[0] - a[0])));
  return a[k] + (b[k] - a[k]) * t;
};
let wicks = '', bodies = '';
for (let x = 25.5; x < 1200; x += 6) {
  const top = at(env, x, 1), low = at(env, x, 2), h = low - top;
  const hi = top + rnd() * h * 0.3, lo = low - rnd() * h * 0.25;
  const down = at(env, x + 6, 1) + at(env, x + 6, 2) + (rnd() - 0.5) * 30 > top + low;
  const y1 = hi + (lo - hi) * (0.1 + rnd() * 0.4), y2 = lo - (lo - hi) * (0.1 + rnd() * 0.35);
  wicks += `<path d="M${x} ${hi.toFixed()}V${lo.toFixed()}" stroke="#a0a0a0" stroke-width="3"/>`;
  bodies += `<path d="M${x + 1} ${y1.toFixed()}V${(y2 + 3).toFixed()}" stroke="${down ? '#e80000' : '#087008'}" stroke-width="4"/>`;
}
byId('plot').innerHTML = wicks + bodies +
  `<polyline points="${slow}" fill="none" stroke="#18a8ac" stroke-width="3"/><polyline points="${fast}" fill="none" stroke="#c8c000" stroke-width="3"/>`;

/* traded volume: [x, top] with the colour runs of the columns */
const vol = [[25,370],[40,358],[50,370],[65,368],[85,362],[97,346],[108,350],[120,370],[135,352],[175,355],[188,352],[205,350],[230,346],[245,390],[260,370],[270,340],[283,330],[295,358],[310,375],[318,345],[335,372],[355,335],[375,340],[385,370],[395,342],[410,358],[430,350],[440,330],[455,345],[470,325],[483,318],[495,305],[505,312],[515,320],[527,265],[535,270],[545,295],[557,310],[570,325],[582,330],[590,380],[600,355],[614,290],[625,320],[640,318],[665,325],[685,345],[710,350],[725,412],[735,360],[748,382],[755,315],[770,345],[785,360],[795,335],[815,375],[825,335],[840,345],[850,322],[858,350],[870,325],[890,332],[905,330],[912,315],[930,328],[940,335],[952,320],[965,382],[975,345],[983,305],[995,378],[1003,325],[1020,330],[1033,298],[1045,322],[1060,308],[1075,280],[1080,297],[1090,270],[1100,310],[1113,340],[1120,325],[1145,338],[1155,308],[1170,320],[1180,275],[1187,318],[1195,320]];
const runs = [36,42,62,75,90,102,112,136,142,148,150,156,160,167,170,178,184,196,226,234,252,264,268,290,296,310,322,330,345,358,372,380,404,410,432,440,452,466,490,512,530,542,576,586,592,598,608,622,634,682,694,708,720,728,746,752,760,772,788,810,816,822,846,854,864,872,880,910,946,950,972,998,1006,1028,1038,1066,1084,1088,1098,1136,1150,1162,1172,1178,1184,1198];
let cols = '';
for (let x = 24; x < 1197; x += 6) {
  const run = runs.findIndex(e => e > x + 2);
  const y = at(vol, x + 3, 1) + rnd() * 14 - 7;
  cols += `<path d="M${x + 3} ${y.toFixed()}V432" stroke="${run % 2 ? '#f80000' : '#087c08'}" stroke-width="6"/>`;
}
byId('volume').innerHTML = cols;
```
